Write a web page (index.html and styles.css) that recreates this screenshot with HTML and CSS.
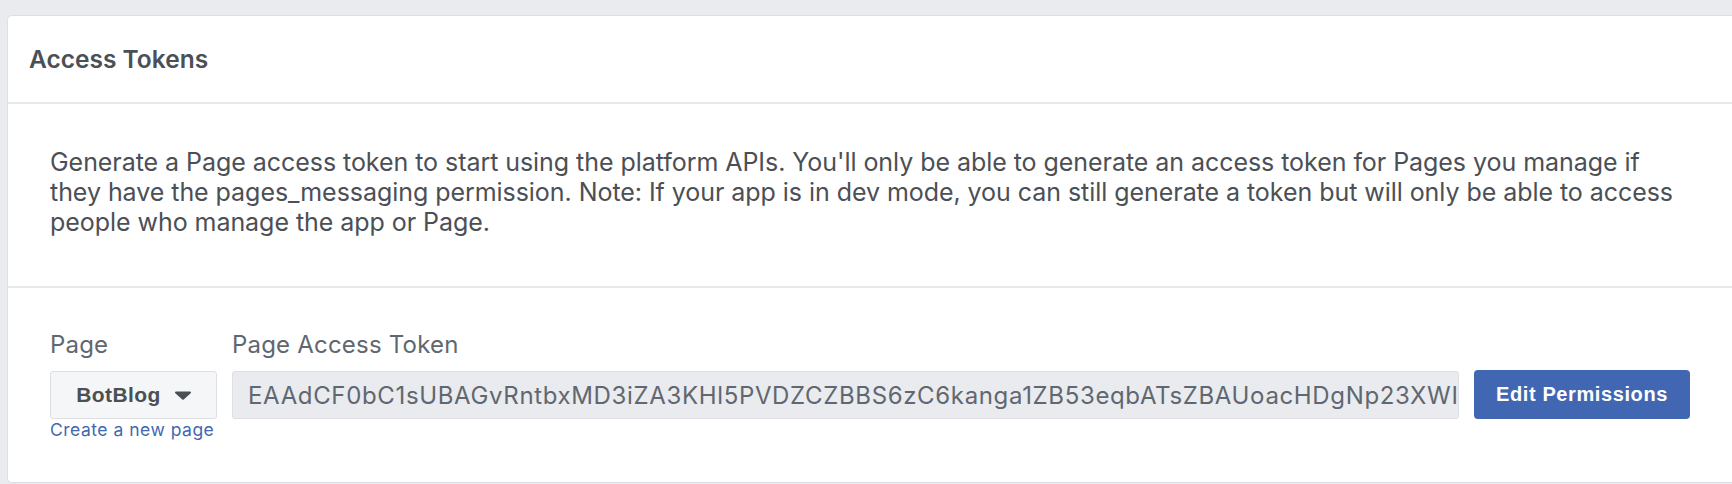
FILE: index.html
```html
<!DOCTYPE html>
<html lang="en">
<head>
<meta charset="utf-8">
<title>Access Tokens</title>
<link rel="stylesheet" href="styles.css">
</head>
<body>
<div class="card">
  <div class="card-header">Access Tokens</div>
  <div class="card-section intro">
    <p class="desc">Generate a Page access token to start using the platform APIs. You'll only be able to generate an access token for Pages you manage if they have the pages_messaging permission. Note: If your app is in dev mode, you can still generate a token but will only be able to access people who manage the app or Page.</p>
  </div>
  <div class="card-section tokens">
    <div class="field page-field">
      <div class="label">Page</div>
      <div class="select">
        <span class="select-text">BotBlog</span>
        <svg class="caret" width="16" height="9" viewBox="0 0 16 9"><path d="M1 0.5h14a1 1 0 0 1 .7 1.7l-7 6.3a1 1 0 0 1-1.4 0l-7-6.3A1 1 0 0 1 1 .5z" fill="#4b4f56"/></svg>
      </div>
      <a class="create-link" href="#">Create a new page</a>
    </div>
    <div class="field token-field">
      <div class="label">Page Access Token</div>
      <div class="token-row">
        <div class="token-box"><span class="token-text">EAAdCF0bC1sUBAGvRntbxMD3iZA3KHl5PVDZCZBBS6zC6kanga1ZB53eqbATsZBAUoacHDgNp23XWI</span></div>
        <button class="btn" type="button">Edit Permissions</button>
      </div>
    </div>
  </div>
</div>
</body>
</html>
```

FILE: styles.css
```css
html, body {
  margin: 0;
  padding: 0;
}
body {
  background: #e9ebee;
  font-family: Inter, "Noto Sans", "Liberation Sans", sans-serif;
  color: #4b4f56;
  padding: 15px 0 0 7px;
  height: 484px;
  box-sizing: border-box;
  overflow: hidden;
}
.card {
  background: #fff;
  border: 1px solid #dddfe2;
  border-right: none;
  border-radius: 5px 0 0 5px;
  height: 468px;
  box-sizing: border-box;
}
.card-header {
  font-size: 24.5px;
  font-weight: 600;
  line-height: 30px;
  color: #4b4f56;
  padding: 28px 18px 28px 21px;
  border-bottom: 2px solid #e6e8eb;
}
.card-section {
  padding: 0 42px;
}
.intro {
  padding-top: 43px;
  padding-bottom: 49px;
  padding-right: 55px;
  border-bottom: 2px solid #e6e8eb;
}
.desc {
  margin: 0;
  font-size: 25px;
  letter-spacing: -0.05px;
  line-height: 30px;
  color: #4b4f56;
}
.tokens {
  display: flex;
  gap: 15px;
  padding-top: 42px;
}
.field {
  display: flex;
  flex-direction: column;
}
.label {
  font-size: 24px;
  line-height: 30px;
  letter-spacing: 0.2px;
  color: #606770;
  margin-bottom: 11px;
}
.select {
  width: 167px;
  height: 48px;
  box-sizing: border-box;
  background: #f5f6f7;
  border: 1px solid #dddfe2;
  border-radius: 3px;
  display: flex;
  align-items: center;
  justify-content: center;
  gap: 14px;
}
.select-text {
  font-family: "Liberation Sans", Arial, sans-serif;
  font-weight: 700;
  font-size: 21px;
  letter-spacing: 0.4px;
  color: #4b4f56;
}
.caret {
  display: block;
  margin-top: 1px;
}
.create-link {
  font-size: 17.5px;
  line-height: 20px;
  color: #4267b2;
  text-decoration: none;
  letter-spacing: 0.5px;
  margin-top: 1px;
}
.token-field {
  flex: 1;
  min-width: 0;
}
.token-row {
  display: flex;
  gap: 15px;
}
.token-box {
  flex: 1;
  min-width: 0;
  height: 48px;
  box-sizing: border-box;
  background: #e9ebee;
  border: 1px solid #dddfe2;
  border-radius: 3px;
  padding: 0 15px;
  display: flex;
  align-items: center;
  overflow: hidden;
  white-space: nowrap;
}
.token-text {
  font-size: 24px;
  letter-spacing: 0.65px;
  color: #606770;
}
.btn {
  width: 216px;
  height: 49px;
  flex: none;
  border: none;
  border-radius: 4px;
  background: #4267b2;
  color: #fff;
  font-family: "Liberation Sans", Arial, sans-serif;
  font-weight: 700;
  font-size: 20px;
  letter-spacing: 0.6px;
  margin-top: -1px;
  cursor: pointer;
}
```
